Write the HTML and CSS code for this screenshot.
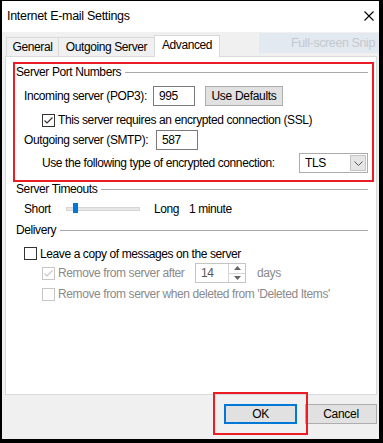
FILE: index.html
```html
<!DOCTYPE html>
<html lang="en">
<head>
    <meta charset="UTF-8">
    <title>Internet E-mail Settings</title>
    <link rel="stylesheet" href="styles.css">
</head>
<body>

<div class="window">
    <div class="titlebar">
        <span class="title">Internet E-mail Settings</span>
        <svg class="close" width="10" height="10" viewBox="0 0 10 10">
            <path d="M0.5 0.5 L9.5 9.5 M9.5 0.5 L0.5 9.5" stroke="#000" stroke-width="1.1" fill="none"/>
        </svg>
    </div>

    <div class="snip">Full-screen Snip</div>

    <div class="tabs">
        <div class="tab tab-general">General</div>
        <div class="tab tab-outgoing">Outgoing Server</div>
        <div class="tab tab-advanced active">Advanced</div>
    </div>

    <div class="panel">
        <div class="highlight">
            <div class="group-title">
                <span>Server Port Numbers</span>
                <div class="rule"></div>
            </div>
            <div class="row row-incoming">
                <span class="label label-incoming">Incoming server (POP3):</span>
                <div class="textbox">995</div>
                <button class="btn btn-defaults">Use Defaults</button>
            </div>
            <div class="row row-ssl">
                <svg class="check" width="13" height="13" viewBox="0 0 13 13">
                    <rect x="0.5" y="0.5" width="12" height="12" fill="#fff" stroke="#333"/>
                    <path d="M2.5 6.5 L5 9 L10.5 3.5" stroke="#333" stroke-width="1.2" fill="none"/>
                </svg>
                <span class="check-text">This server requires an encrypted connection (SSL)</span>
            </div>
            <div class="row row-outgoing">
                <span class="label label-outgoing">Outgoing server (SMTP):</span>
                <div class="textbox">587</div>
            </div>
            <div class="row row-encrypt">
                <span class="label label-encrypt">Use the following type of encrypted connection:</span>
                <div class="select">
                    <span class="select-value">TLS</span>
                    <div class="select-arrow">
                        <svg width="9" height="5" viewBox="0 0 9 5">
                            <path d="M0.5 0.5 L4.5 4.5 L8.5 0.5" stroke="#555" fill="none"/>
                        </svg>
                    </div>
                </div>
            </div>
        </div>

        <div class="group-title section-title title-timeouts">
            <span>Server Timeouts</span>
            <div class="rule"></div>
        </div>
        <div class="row row-slider">
            <span class="slider-short">Short</span>
            <div class="track"><div class="thumb"></div></div>
            <span class="slider-long">Long</span>
            <span>1 minute</span>
        </div>

        <div class="group-title section-title title-delivery">
            <span>Delivery</span>
            <div class="rule"></div>
        </div>
        <div class="row row-leave">
            <svg class="check" width="13" height="13" viewBox="0 0 13 13">
                <rect x="0.5" y="0.5" width="12" height="12" fill="#fff" stroke="#333"/>
            </svg>
            <span class="check-text">Leave a copy of messages on the server</span>
        </div>
        <div class="row row-sub">
            <svg class="check" width="13" height="13" viewBox="0 0 13 13">
                <rect x="0.5" y="0.5" width="12" height="12" fill="#fff" stroke="#c6c6c6"/>
                <path d="M2.5 6.5 L5 9 L10.5 3.5" stroke="#c6c6c6" stroke-width="1.2" fill="none"/>
            </svg>
            <span class="check-text disabled remove-after">Remove from server after</span>
            <div class="spin">
                <span class="spin-value">14</span>
                <div class="spin-buttons">
                    <div class="spin-btn">
                        <svg width="7" height="4" viewBox="0 0 7 4"><path d="M0 4 L3.5 0 L7 4 Z" fill="#666"/></svg>
                    </div>
                    <div class="spin-btn">
                        <svg width="7" height="4" viewBox="0 0 7 4"><path d="M0 0 L3.5 4 L7 0 Z" fill="#666"/></svg>
                    </div>
                </div>
            </div>
            <span class="disabled days">days</span>
        </div>
        <div class="row row-sub row-deleted">
            <svg class="check" width="13" height="13" viewBox="0 0 13 13">
                <rect x="0.5" y="0.5" width="12" height="12" fill="#fff" stroke="#c6c6c6"/>
            </svg>
            <span class="check-text disabled">Remove from server when deleted from 'Deleted Items'</span>
        </div>
    </div>

    <div class="footer">
        <button class="btn btn-ok">OK</button>
        <button class="btn btn-cancel">Cancel</button>
    </div>
    <div class="ok-highlight"></div>
</div>

</body>
</html>
```

FILE: styles.css
```css
body {
    margin: 0;
    padding: 0;
    background-color: #fff;
    font-family: 'Liberation Sans', Arial, sans-serif;
    font-size: 12px;
    letter-spacing: -0.4px;
    color: #000;
    white-space: nowrap;
}

.window {
    position: relative;
    width: 383px;
    height: 443px;
    box-sizing: border-box;
    border-style: solid;
    border-color: #000;
    border-width: 1px 4px 4px 2px;
    background-color: #f0f0f0;
}

.titlebar {
    display: flex;
    align-items: center;
    justify-content: space-between;
    height: 31px;
    padding: 0 5px 2px 5px;
    box-sizing: border-box;
    background-color: #fff;
    font-size: 12.5px;
    letter-spacing: -0.3px;
}

.close {
    display: block;
}

.snip {
    position: absolute;
    left: 257px;
    top: 32px;
    right: 0;
    height: 20px;
    box-sizing: border-box;
    padding-right: 4px;
    background-color: #e3e9f0;
    color: #c3c8ce;
    text-align: right;
    line-height: 20px;
    font-size: 12.5px;
}

/* tabs */
.tabs {
    display: flex;
    align-items: flex-end;
    height: 24px;
    padding-left: 4px;
    box-sizing: border-box;
}
.tab {
    height: 19px;
    box-sizing: border-box;
    border: 1px solid #d9d9d9;
    border-bottom: none;
    margin-left: -1px;
    text-align: center;
    line-height: 19px;
}
.tab-general {
    margin-left: 0;
    width: 53px;
}
.tab-outgoing {
    width: 97px;
}
.tab.active {
    width: 66px;
    height: 22px;
    line-height: 18px;
    margin-bottom: -1px;
    background-color: #fff;
    position: relative;
    z-index: 1;
}

.panel {
    height: 339px;
    margin: 0 2px 0 3px;
    box-sizing: border-box;
    border: 1px solid #d9d9d9;
    background-color: #fff;
}

.highlight {
    margin: 5px 2px 0 7px;
    border: 2px solid #ec1c24;
    padding-bottom: 7px;
}

.group-title {
    display: flex;
    align-items: center;
    height: 16px;
    padding-left: 1px;
    padding-right: 4px;
}
.rule {
    flex: 1;
    height: 1px;
    margin-left: 4px;
    background-color: #a9a9a9;
}
.section-title {
    padding-left: 10px;
    padding-right: 8px;
}
.title-timeouts {
    height: 14px;
}
.title-delivery {
    margin-top: 3px;
}

.row {
    display: flex;
    align-items: center;
    height: 20px;
}
.label {
    flex: none;
}
.row-incoming {
    margin-top: 6px;
    padding-left: 9px;
}
.label-incoming {
    width: 129px;
}
.row-ssl {
    margin-top: 4px;
    padding-left: 27px;
}
.row-outgoing {
    padding-left: 9px;
}
.label-outgoing {
    width: 132px;
}
.row-encrypt {
    margin-top: 3px;
    padding-left: 27px;
}
.label-encrypt {
    width: 257px;
}

.check {
    flex: none;
    display: block;
}
.check-text {
    margin-left: 3px;
}

.textbox {
    width: 42px;
    height: 20px;
    box-sizing: border-box;
    border: 1px solid #7a7a7a;
    padding-left: 5px;
    line-height: 18px;
}

.btn {
    height: 20px;
    box-sizing: border-box;
    border: 1px solid #adadad;
    background-color: #e1e1e1;
    font-family: 'Liberation Sans', Arial, sans-serif;
    font-size: 12px;
    letter-spacing: -0.3px;
    color: #000;
    padding: 0;
}
.btn-defaults {
    width: 78px;
    margin-left: 10px;
}

.select {
    display: flex;
    align-items: center;
    width: 69px;
    height: 20px;
    box-sizing: border-box;
    border: 1px solid #acacac;
    padding: 1px;
}
.select-value {
    flex: 1;
    padding-left: 4px;
}
.select-arrow {
    display: flex;
    align-items: center;
    justify-content: center;
    width: 16px;
    height: 16px;
    box-sizing: border-box;
    border: 1px solid #c4c4c4;
    background-color: #e5e5e5;
}

/* slider */
.row-slider {
    margin-top: 3px;
    padding-left: 18px;
}
.slider-short {
    width: 42px;
}
.track {
    position: relative;
    width: 74px;
    height: 4px;
    box-sizing: border-box;
    border: 1px solid #d6d6d6;
    background-color: #e7e7e7;
}
.thumb {
    position: absolute;
    left: 6px;
    top: -5px;
    width: 5px;
    height: 10px;
    background-color: #0078d7;
}
.slider-long {
    width: 35px;
    margin-left: 14px;
}

.row-leave {
    margin-top: 6px;
    height: 19px;
    padding-left: 18px;
}
.row-sub {
    padding-left: 36px;
}
.row-deleted {
    margin-top: 1px;
}
.disabled {
    color: #8a8a8a;
}
.remove-after {
    width: 137px;
}

.spin {
    display: flex;
    width: 51px;
    height: 20px;
    box-sizing: border-box;
    border: 1px solid #c4c4c4;
}
.spin-value {
    flex: 1;
    padding-left: 5px;
    line-height: 19px;
    color: #555;
}
.spin-buttons {
    display: flex;
    flex-direction: column;
    width: 16px;
    border-left: 1px solid #d4d4d4;
}
.spin-btn {
    flex: 1;
    display: flex;
    align-items: center;
    justify-content: center;
}
.spin-btn + .spin-btn {
    border-top: 1px solid #d4d4d4;
}
.days {
    margin-left: 11px;
}

/* footer */
.footer {
    display: flex;
    justify-content: flex-end;
    gap: 8px;
    margin-top: 9px;
    padding-right: 2px;
}
.btn-ok {
    width: 73px;
    border: 2px solid #0078d7;
}
.btn-cancel {
    width: 72px;
}

.ok-highlight {
    position: absolute;
    left: 211px;
    top: 391px;
    width: 95px;
    height: 43px;
    box-sizing: border-box;
    border: 2px solid #ec1c24;
}
```
